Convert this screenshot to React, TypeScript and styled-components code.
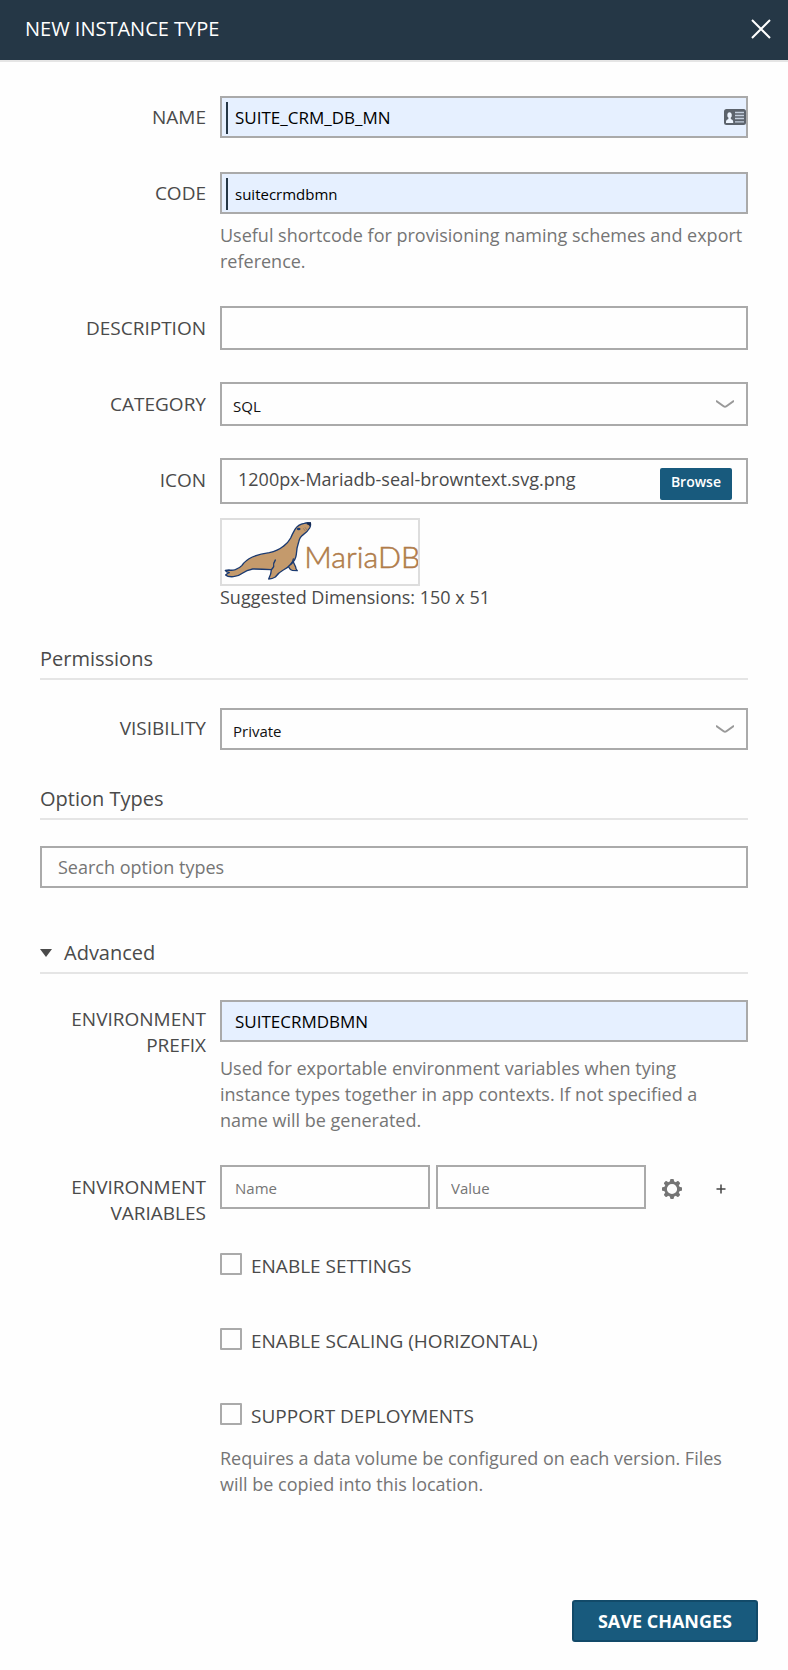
import React, { useRef, useState } from "react";
import styled, { createGlobalStyle } from "styled-components";

const color = {
  navy: "#253746",
  blue: "#185a7d",
  blueEdge: "#124a69",
  text: "#4a4a4a",
  muted: "#757575",
  border: "#aaaaaa",
  rule: "#e5e5e5",
  autofill: "#e6f0ff",
};

const GlobalStyle = createGlobalStyle`
  *, *::before, *::after { box-sizing: border-box; }
  body {
    margin: 0;
    background: #fefefe;
    color: ${color.text};
    font-family: "Open Sans", "Noto Sans", sans-serif;
    font-size: 18px;
    line-height: 26px;
  }
  button, input, select { font-family: inherit; border-radius: 0; }
`;

const Dialog = styled.div`
  min-height: 100vh;
  display: flex;
  flex-direction: column;
`;

const Header = styled.header`
  display: flex;
  align-items: center;
  justify-content: space-between;
  height: 62px;
  padding: 0 16px 3px 25px;
  background: ${color.navy};
  border-bottom: 2px solid ${color.rule};
`;

const Title = styled.h1`
  margin: 0;
  font-size: 20px;
  line-height: 28px;
  font-weight: 400;
  color: #fff;
`;

const IconButton = styled.button`
  display: inline-flex;
  align-items: center;
  justify-content: center;
  width: 22px;
  height: 22px;
  padding: 0;
  border: 0;
  background: none;
  color: ${color.muted};
  cursor: pointer;
`;

const Form = styled.form`
  flex: 1;
  display: flex;
  flex-direction: column;
`;

const Body = styled.div`
  flex: 1;
  padding: 33px 40px 0;
`;

const Row = styled.div`
  display: grid;
  grid-template-columns: 166px minmax(0, 1fr);
  column-gap: 14px;
  margin-bottom: 32px;
`;

const Label = styled.label<{ $short?: boolean }>`
  padding-top: ${(p) => (p.$short ? 7 : 9)}px;
  font-size: 19px;
  text-align: right;
  text-transform: uppercase;
`;

const TextInput = styled.input<{ $filled?: boolean; $marked?: boolean; $size?: number }>`
  display: block;
  width: 100%;
  height: ${(p) => (p.$filled ? 42 : 44)}px;
  margin: ${(p) => (p.$filled ? "1px 0" : "0")};
  padding: 1px 13px 0;
  border: 2px solid ${color.border};
  background-color: ${(p) => (p.$filled ? color.autofill : "transparent")};
  background-image: ${(p) =>
    p.$marked ? `linear-gradient(${color.navy}, ${color.navy})` : "none"};
  background-repeat: no-repeat;
  background-position: 4px 4px;
  background-size: 2px 32px;
  color: #000;
  font-size: ${(p) => p.$size ?? 15}px;
  outline: none;
  &::placeholder { color: ${color.muted}; opacity: 1; }
`;

const Overlaid = styled.div`
  position: relative;
  svg {
    position: absolute;
    top: 50%;
    right: 14px;
    transform: translateY(-50%);
    pointer-events: none;
  }
`;

const CardOverlay = styled(Overlaid)`
  svg { right: 2px; }
`;

const Select = styled.select<{ $short?: boolean }>`
  display: block;
  width: 100%;
  height: ${(p) => (p.$short ? 42 : 44)}px;
  padding: 3px 40px 0 11px;
  border: 2px solid ${color.border};
  background: transparent;
  color: #111;
  font-size: 15px;
  appearance: none;
  outline: none;
`;

const Help = styled.p<{ $gap: number }>`
  margin: ${(p) => p.$gap}px 0 0;
  color: ${color.muted};
`;

const FileBox = styled.div`
  display: flex;
  align-items: flex-start;
  justify-content: space-between;
  height: 46px;
  padding: 6px 14px 0 16px;
  border: 2px solid ${color.border};
`;

const HiddenFile = styled.input`
  display: none;
`;

const BrowseButton = styled.button`
  height: 32px;
  margin-top: 2px;
  padding: 0 11px 6px;
  border: 0;
  border-radius: 2px;
  background: ${color.blue};
  color: #fff;
  font-size: 14px;
  font-weight: 600;
  cursor: pointer;
`;

const Preview = styled.div`
  width: 200px;
  height: 68px;
  margin-top: 14px;
  border: 2px solid #dddddd;
  overflow: hidden;
  svg { display: block; }
`;

const Caption = styled.div`
  padding-bottom: 2px;
  line-height: 22px;
`;

const Heading = styled.h2<{ $after?: number }>`
  display: flex;
  align-items: center;
  margin: 34px 0 ${(p) => p.$after ?? 26}px;
  padding-bottom: 5px;
  border-bottom: 2px solid ${color.rule};
  font-size: 20px;
  line-height: 29px;
  font-weight: 400;
`;

const Toggle = styled.button`
  display: flex;
  align-items: center;
  gap: 12px;
  padding: 0;
  border: 0;
  background: none;
  color: inherit;
  font-size: 20px;
  line-height: 29px;
  cursor: pointer;
`;

const SearchInput = styled(TextInput)`
  height: 42px;
  margin-bottom: 50px;
  padding: 0 16px;
  font-size: 18px;
`;

const Variables = styled.div`
  display: grid;
  grid-template-columns: minmax(0, 1fr) minmax(0, 1fr) 96px;
  gap: 6px;
  align-items: center;
  align-self: start;
`;

const Actions = styled.div`
  display: flex;
  justify-content: space-between;
  padding: 4px 16px 0 9px;
`;

const Checks = styled.div`
  display: flex;
  flex-direction: column;
  gap: 48px;
  margin: -5px 0 0 180px;
`;

const Check = styled.label`
  display: flex;
  align-items: flex-start;
  gap: 9px;
  font-size: 19px;
  line-height: 27px;
  text-transform: uppercase;
`;

const Box = styled.input`
  flex: none;
  width: 22px;
  height: 22px;
  margin: 0;
  border: 2px solid ${color.border};
  border-radius: 1px;
  background: transparent;
  appearance: none;
  &:checked { background: ${color.blue}; }
`;

const Footer = styled.footer`
  display: flex;
  justify-content: flex-end;
  padding: 28px 30px;
`;

const SaveButton = styled.button`
  height: 42px;
  padding: 0 24px;
  border: 2px solid ${color.blueEdge};
  border-radius: 3px;
  background: ${color.blue};
  color: #fff;
  font-size: 18px;
  font-weight: 700;
  text-transform: uppercase;
  cursor: pointer;
`;

const CloseIcon = () => (
  <svg width="22" height="22" viewBox="0 0 22 22" fill="none" stroke="#fff" strokeWidth="2">
    <path d="M2 2 20 20M20 2 2 20" />
  </svg>
);

const ContactCardIcon = () => (
  <svg width="22" height="16" viewBox="0 0 22 16">
    <rect width="22" height="16" rx="2.5" fill="#5c636c" />
    <path d="M2 14V12.6Q2 10.6 4.4 10V8.6Q3.4 8 3.4 7V5.2Q3.6 3.2 5.5 3.2T7.7 5.2V7Q7.7 8 6.8 8.6V10Q9.2 10.6 9.2 12.6V14Z" fill="#eef5ff" />
    <path d="M11 3.5h9M11 6.5h9M11 9.5h9M11 12.8h9" stroke="#c4cfde" strokeWidth="1.3" />
  </svg>
);

const Chevron = () => (
  <svg width="18" height="8" viewBox="0 0 18 8" fill="none" stroke="#999" strokeWidth="2">
    <path d="M0 .8 7.6 6.2Q9 7.2 10.4 6.2L18 .8" />
  </svg>
);

const GearIcon = () => (
  <svg width="20" height="20" viewBox="-10 -10 20 20" fill="currentColor">
    <path
      fillRule="evenodd"
      d="M0-7.8A7.8 7.8 0 1 1 0 7.8 7.8 7.8 0 1 1 0-7.8ZM0-5.1A5.1 5.1 0 1 0 0 5.1 5.1 5.1 0 1 0 0-5.1Z"
    />
    {[0, 45, 90, 135, 180, 225, 270, 315].map((a) => (
      <path key={a} transform={`rotate(${a})`} d="M-2.3-7-1.7-9.6Q-1.6-10-1.2-10H1.2Q1.6-10 1.7-9.6L2.3-7Z" />
    ))}
  </svg>
);

const PlusIcon = () => (
  <svg width="10" height="10" viewBox="0 0 10 10" stroke="#444" strokeWidth="1.5">
    <path d="M5 .5V9.5M.5 5H9.5" />
  </svg>
);

const Caret = () => (
  <svg width="12" height="8" viewBox="0 0 12 8" fill={color.text}>
    <path d="M0 0H12L6 8Z" />
  </svg>
);

const MariaLogo = () => (
  <svg width="196" height="64" viewBox="36 30 588 192" role="img" aria-label="MariaDB">
    <g fill="#c49a6c" stroke="#1b3a70" strokeWidth="4" strokeLinejoin="round" strokeLinecap="round">
      <path d="M228 172Q234 166 236 171Q240 180 247 181L262 182Q257 178 257 171L250 156L236 150Z" />
      <path d="M301 39Q291 37 283 40Q264 43 255 58Q247 72 242 84Q234 99 220 109Q203 123 178 128Q148 132 127 141Q106 151 96 166Q88 175 76 179Q66 182 57 180L46 181Q49 187 58 188Q52 190 47 195Q53 201 70 200Q86 199 97 190Q110 180 128 177Q155 177 184 179Q184 191 176 207Q187 207 196 201Q205 188 220 180Q234 173 243 162Q257 151 259 133Q260 113 266 96Q269 81 280 74Q291 67 299 54Q303 47 301 39Z" />
      <path d="M196 150Q189 160 191 170Q188 175 184 179M243 162Q249 155 250 147" fill="none" />
    </g>
    <path d="M291 38 303 37Q304 44 300 49Q296 44 290 43Z" fill="#14284f" />
    <ellipse cx="266" cy="57" rx="5.5" ry="3.8" fill="#1b3a70" />
    <path d="M280 55 286 63M285 52 291 60" stroke="#7d6a60" strokeWidth="2" />
    <text
      x="283"
      y="173"
      fontFamily="Lato, sans-serif"
      fontSize="91"
      fontWeight="300"
      fill="#b07c4a"
      stroke="#b07c4a"
      strokeWidth="1.6"
    >
      MariaDB
    </text>
  </svg>
);

export default function App() {
  const fileRef = useRef<HTMLInputElement>(null);
  const [fileName, setFileName] = useState("1200px-Mariadb-seal-browntext.svg.png");
  const [open, setOpen] = useState(true);

  return (
    <>
      <GlobalStyle />
      <Dialog role="dialog" aria-labelledby="title">
        <Header>
          <Title id="title">NEW INSTANCE TYPE</Title>
          <IconButton type="button" aria-label="Close">
            <CloseIcon />
          </IconButton>
        </Header>
        <Form onSubmit={(e) => e.preventDefault()}>
          <Body>
            <Row>
              <Label htmlFor="name">Name</Label>
              <CardOverlay>
                <TextInput id="name" $filled $marked $size={17} defaultValue="SUITE_CRM_DB_MN" />
                <ContactCardIcon />
              </CardOverlay>
            </Row>
            <Row>
              <Label htmlFor="code">Code</Label>
              <div>
                <TextInput id="code" $filled $marked defaultValue="suitecrmdbmn" />
                <Help $gap={8}>
                  Useful shortcode for provisioning naming schemes and export reference.
                </Help>
              </div>
            </Row>
            <Row>
              <Label htmlFor="description">Description</Label>
              <TextInput id="description" />
            </Row>
            <Row>
              <Label htmlFor="category">Category</Label>
              <Overlaid>
                <Select id="category" defaultValue="SQL">
                  <option>SQL</option>
                </Select>
                <Chevron />
              </Overlaid>
            </Row>
            <Row>
              <Label htmlFor="icon">Icon</Label>
              <div>
                <FileBox>
                  <span>{fileName}</span>
                  <HiddenFile
                    id="icon"
                    type="file"
                    ref={fileRef}
                    onChange={(e) => setFileName(e.target.files?.[0]?.name ?? fileName)}
                  />
                  <BrowseButton type="button" onClick={() => fileRef.current?.click()}>
                    Browse
                  </BrowseButton>
                </FileBox>
                <Preview>
                  <MariaLogo />
                </Preview>
                <Caption>Suggested Dimensions: 150 x 51</Caption>
              </div>
            </Row>

            <Heading $after={28}>Permissions</Heading>
            <Row>
              <Label htmlFor="visibility" $short>Visibility</Label>
              <Overlaid>
                <Select id="visibility" $short defaultValue="Private">
                  <option>Private</option>
                </Select>
                <Chevron />
              </Overlaid>
            </Row>

            <Heading>Option Types</Heading>
            <SearchInput type="search" aria-label="Search option types" placeholder="Search option types" />

            <Heading $after={25}>
              <Toggle type="button" aria-expanded={open} onClick={() => setOpen(!open)}>
                <Caret />
                Advanced
              </Toggle>
            </Heading>
            {open && (
              <>
                <Row>
                  <Label htmlFor="prefix" $short>Environment Prefix</Label>
                  <div>
                    <TextInput id="prefix" $filled $size={17} defaultValue="SUITECRMDBMN" />
                    <Help $gap={13}>
                      Used for exportable environment variables when tying instance types together in
                      app contexts. If not specified a name will be generated.
                    </Help>
                  </div>
                </Row>
                <Row>
                  <Label htmlFor="var-name">Environment Variables</Label>
                  <Variables>
                    <TextInput id="var-name" placeholder="Name" />
                    <TextInput aria-label="Value" placeholder="Value" />
                    <Actions>
                      <IconButton type="button" aria-label="Variable settings">
                        <GearIcon />
                      </IconButton>
                      <IconButton type="button" aria-label="Add variable">
                        <PlusIcon />
                      </IconButton>
                    </Actions>
                  </Variables>
                </Row>
                <Checks>
                  <Check>
                    <Box type="checkbox" />
                    Enable Settings
                  </Check>
                  <Check>
                    <Box type="checkbox" />
                    Enable Scaling (Horizontal)
                  </Check>
                  <div>
                    <Check>
                      <Box type="checkbox" />
                      Support Deployments
                    </Check>
                    <Help $gap={15}>
                      Requires a data volume be configured on each version. Files will be copied into
                      this location.
                    </Help>
                  </div>
                </Checks>
              </>
            )}
          </Body>
          <Footer>
            <SaveButton type="submit">Save Changes</SaveButton>
          </Footer>
        </Form>
      </Dialog>
    </>
  );
}
